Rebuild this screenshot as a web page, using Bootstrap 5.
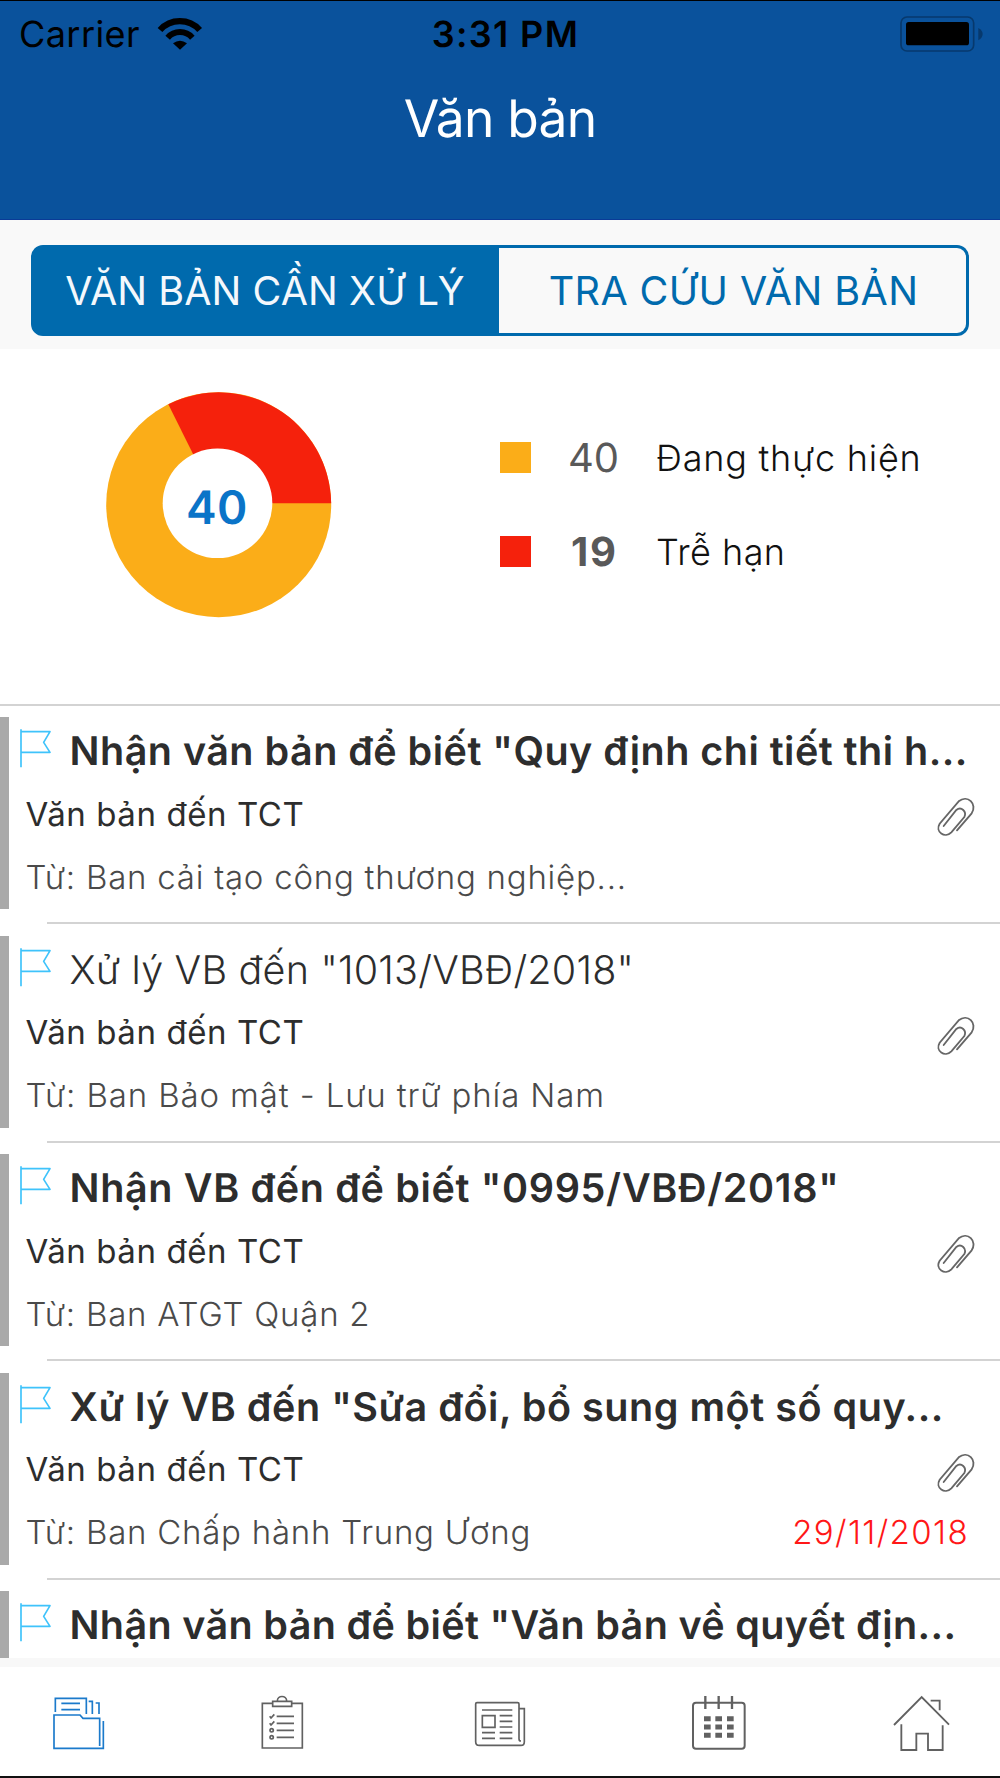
<!DOCTYPE html>
<html lang="vi">
<head>
<meta charset="utf-8">
<meta name="viewport" content="width=device-width, initial-scale=1">
<title>Văn bản</title>
<link href="https://cdn.jsdelivr.net/npm/bootstrap@5.3.0/dist/css/bootstrap.min.css" rel="stylesheet">
<style>
body{font-family:Inter,"Liberation Sans",sans-serif;color:#2d2d2d;background:#fff;height:1778px;overflow:hidden;text-rendering:geometricPrecision}
svg{display:block;flex:none;fill:none}
.app-head{background:#0a529c;height:220px;border-top:1px solid #000;border-bottom:1px solid #0a3b97;color:#000}
.status-bar{height:66px;font-size:36px;line-height:1;display:grid;grid-template-columns:1fr auto 1fr}
.carrier{padding-left:19px;letter-spacing:.43px}
.wifi{margin-left:16px}
.clock{font-weight:600;letter-spacing:1.37px;margin-left:11px}
.battery{margin-right:13px;justify-self:end}
.app-title{font-size:51.5px;line-height:105px;font-weight:400;letter-spacing:-.78px;margin:0}
.seg-bar{background:#f9f9f9;height:129px;padding:25px 31px 0}
.seg-bar .btn{--bs-btn-font-size:39.5px;--bs-btn-line-height:1;--bs-btn-border-width:3px;--bs-btn-border-radius:12px;--bs-btn-padding-x:0;--bs-btn-padding-y:0;--bs-btn-color:#006aad;--bs-btn-border-color:#006aad;--bs-btn-active-bg:#006aad;--bs-btn-active-border-color:#006aad;--bs-btn-active-color:#f4f8fc;height:91px;padding-top:2px}
.seg-bar .seg-a{flex:0 0 468px;letter-spacing:.08px}
.seg-bar .seg-b{letter-spacing:.42px;margin-left:-2px;border-left:0;padding-left:3px}
.summary{height:355px;padding:43px 0 0 106px}
.donut-num{font-size:46px;font-weight:580;letter-spacing:.36px;fill:#0a74c8}
.legend-box{margin:19px 0 0 168px}
.legend-line{height:93.7px;line-height:1}
.swatch{width:31px;height:31px;margin-right:37px}
.legend-num{font-size:40px;width:88px;color:#595959}
.legend-num.late{font-weight:700;letter-spacing:1.75px;padding-left:3px}
.legend-name{font-size:36px;font-weight:340;letter-spacing:.78px;color:#111;padding-top:1px}
.legend-num.late + .legend-name{letter-spacing:.45px}
.doc-list{height:954px;border-top:2px solid #d3d3d3}
.doc-row{height:218.5px;padding-top:11px;flex:none}
.doc-main{height:192px}
.doc-bar{width:9px;background:#a9a9a9;flex:none}
.doc-body{padding:0 22px 0 9px;min-width:0}
.flag{margin-top:9px;width:36px;height:44px}
.doc-title{font-size:39.5px;line-height:68.6px;height:65.5px;font-weight:600;margin:0 0 0 15.5px;letter-spacing:.48px;white-space:nowrap}
.doc-row:nth-child(2) .doc-title{font-weight:340;letter-spacing:.2px}
.doc-row:nth-child(3) .doc-title{letter-spacing:.66px}
.doc-row:nth-child(4) .doc-title{letter-spacing:.54px}
.doc-row:nth-child(5) .doc-title{letter-spacing:.35px}
.doc-kind,.doc-from{font-size:33px;line-height:63px;height:63px;padding-left:7.5px}
.doc-kind{letter-spacing:.58px;font-weight:390}
.doc-from{letter-spacing:.76px;font-weight:350;color:#4a4a4a}
.doc-row:nth-child(2) .doc-from{letter-spacing:.88px}
.doc-date{color:#ff1717;font-weight:350;letter-spacing:1.4px;margin-right:9px}
.clip{margin-top:12.5px}
.doc-sep{height:2px;margin:13px 0 0 47px;background:#d3d3d3}
.tab-strip{background:#fff;border-top:9px solid #f8f8f8;border-bottom:2px solid #111;height:120px;padding:25px 0 0 48px;color:#616161;stroke-width:5}
.tab-strip a{color:inherit;margin-right:158px}
.tab-strip a:first-child{color:#1b7acb;margin-right:144px}
.tab-strip a:nth-child(4){margin-right:143px}
.tab-strip a:last-child{margin-right:0}
</style>
</head>
<body class="d-flex flex-column">
<svg width="0" height="0" class="position-absolute">
  <symbol id="flag" viewBox="54 108 108 132"><path d="M63 118V232M63 125H150L131 157L150 187H63" stroke="#3fc3fb" stroke-width="5" stroke-linejoin="round"/></symbol>
  <symbol id="clip" viewBox="1302 315 132 132"><path d="M1371 421L1415 370C1433 343 1403 312 1376 334L1319 401C1304 426 1335 446 1354 427L1393 381C1401 365 1384 348 1369 360L1331 408" stroke="#666" stroke-width="5.5" stroke-linecap="round"/></symbol>
</svg>
<header class="app-head flex-shrink-0">
  <div class="status-bar align-items-center">
    <div class="carrier d-flex align-items-center">Carrier
      <svg class="wifi" width="48" height="36" viewBox="468 45 144 108"><path d="M480 87A80 80 0 0 1 599 87" stroke="#000" stroke-width="19"/><path d="M503 110A49 49 0 0 1 577 110" stroke="#000" stroke-width="18"/><path d="M540 146L519 127Q540 111 561 127Z" fill="#000"/></svg>
    </div>
    <div class="clock">3:31 PM</div>
    <svg class="battery" width="90" height="44" viewBox="1191 36 270 132"><rect x="1203" y="51" width="218" height="102" rx="18" stroke="#07396d" stroke-width="5"/><rect x="1218" y="66" width="189" height="70" rx="8" fill="#000"/><path d="M1435 84Q1448 91 1448 102T1435 121Z" fill="#07396d"/></svg>
  </div>
  <h1 class="app-title text-center text-white">Văn bản</h1>
</header>
<nav class="seg-bar flex-shrink-0">
  <div class="btn-group d-flex">
    <button type="button" class="btn btn-outline-primary active seg-a">VĂN BẢN CẦN XỬ LÝ</button>
    <button type="button" class="btn btn-outline-primary seg-b">TRA CỨU VĂN BẢN</button>
  </div>
</nav>
<section class="summary d-flex align-items-start flex-shrink-0">
  <svg width="226" height="226" viewBox="0 0 226 226"><circle cx="112.7" cy="112.7" r="112.5" fill="#fbad18"/><path d="M111.5 111.3L62.3 12.3A112.5 112.5 0 0 1 225.2 111.3Z" fill="#f5210c"/><circle cx="111.5" cy="111.3" r="54.8" fill="#fff"/><text class="donut-num" x="80" y="131.8">40</text></svg>
  <div class="legend-box">
    <div class="legend-line d-flex align-items-center"><span class="swatch" style="background:#fbad18"></span><span class="legend-num">40</span><span class="legend-name">Đang thực hiện</span></div>
    <div class="legend-line d-flex align-items-center"><span class="swatch" style="background:#f5210c"></span><span class="legend-num late">19</span><span class="legend-name">Trễ hạn</span></div>
  </div>
</section>
<main class="doc-list d-flex flex-column overflow-hidden flex-shrink-0">
  <article class="doc-row">
    <div class="doc-main d-flex"><div class="doc-bar"></div><div class="doc-body flex-grow-1">
      <div class="d-flex"><svg class="flag"><use href="#flag"/></svg><h2 class="doc-title">Nhận văn bản để biết "Quy định chi tiết thi h...</h2></div>
      <div class="doc-kind d-flex justify-content-between">Văn bản đến TCT<svg class="clip" width="44" height="44"><use href="#clip"/></svg></div>
      <div class="doc-from">Từ: Ban cải tạo công thương nghiệp...</div>
    </div></div>
    <div class="doc-sep"></div>
  </article>
  <article class="doc-row">
    <div class="doc-main d-flex"><div class="doc-bar"></div><div class="doc-body flex-grow-1">
      <div class="d-flex"><svg class="flag"><use href="#flag"/></svg><h2 class="doc-title">Xử lý VB đến "1013/VBĐ/2018"</h2></div>
      <div class="doc-kind d-flex justify-content-between">Văn bản đến TCT<svg class="clip" width="44" height="44"><use href="#clip"/></svg></div>
      <div class="doc-from">Từ: Ban Bảo mật - Lưu trữ phía Nam</div>
    </div></div>
    <div class="doc-sep"></div>
  </article>
  <article class="doc-row">
    <div class="doc-main d-flex"><div class="doc-bar"></div><div class="doc-body flex-grow-1">
      <div class="d-flex"><svg class="flag"><use href="#flag"/></svg><h2 class="doc-title">Nhận VB đến để biết "0995/VBĐ/2018"</h2></div>
      <div class="doc-kind d-flex justify-content-between">Văn bản đến TCT<svg class="clip" width="44" height="44"><use href="#clip"/></svg></div>
      <div class="doc-from">Từ: Ban ATGT Quận 2</div>
    </div></div>
    <div class="doc-sep"></div>
  </article>
  <article class="doc-row">
    <div class="doc-main d-flex"><div class="doc-bar"></div><div class="doc-body flex-grow-1">
      <div class="d-flex"><svg class="flag"><use href="#flag"/></svg><h2 class="doc-title">Xử lý VB đến "Sửa đổi, bổ sung một số quy...</h2></div>
      <div class="doc-kind d-flex justify-content-between">Văn bản đến TCT<svg class="clip" width="44" height="44"><use href="#clip"/></svg></div>
      <div class="doc-from d-flex justify-content-between">Từ: Ban Chấp hành Trung Ương<span class="doc-date">29/11/2018</span></div>
    </div></div>
    <div class="doc-sep"></div>
  </article>
  <article class="doc-row">
    <div class="doc-main d-flex"><div class="doc-bar"></div><div class="doc-body flex-grow-1">
      <div class="d-flex"><svg class="flag"><use href="#flag"/></svg><h2 class="doc-title">Nhận văn bản để biết "Văn bản về quyết địn...</h2></div>
    </div></div>
  </article>
</main>
<nav class="tab-strip d-flex flex-shrink-0">
  <a href="#"><svg width="60" height="60" viewBox="144 156 180 180" stroke="currentColor"><path d="M166 216V175H259V222M184 190H240M184 209H240M266 184H277V222M287 189H297V222M299 318V235H249L240 225H162V325H310V243"/></svg></a>
  <a href="#"><svg width="60" height="60" viewBox="756 156 180 180" stroke="currentColor"><path d="M817 190H787V324H907V190H876M818 184H875V199H818ZM832 183C832 165 860 165 860 183M809 229L813 234L823 223M809 250L813 255L823 244M830 229H882M830 250H882M830 271H882M830 292H882"/><circle cx="815" cy="271" r="5"/><circle cx="815" cy="292" r="5"/></svg></a>
  <a href="#"><svg width="60" height="60" viewBox="90 156 180 180" stroke="currentColor"><path d="M237 297V192Q237 188 233 188H111Q107 188 107 192V305Q107 316 118 316H243Q253 316 253 305V206H238M237 296Q237 303 243 303M126 210H217M179 227H217M179 244H217M179 261H217M126 278H165M179 278H217M126 295H165M179 295H217M127 227H165V262H127Z"/></svg></a>
  <a href="#"><svg width="60" height="60" viewBox="744 156 180 180" stroke="currentColor"><rect x="759" y="188" width="155" height="138" rx="9" stroke-width="6"/><path d="M796 168V207M836 168V207M876 168V207" stroke-width="7"/><path d="M802 229V295M836 229V295M871 229V295" stroke-width="20" stroke-dasharray="15 9.5"/></svg></a>
  <a href="#"><svg width="60" height="60" viewBox="693 756 180 180" stroke="currentColor"><path d="M702 855L785 771L867 854M812 782H839V811M724 853V930H769V881H804V930H848V856" stroke-width="5.5"/></svg></a>
</nav>
<script src="https://cdn.jsdelivr.net/npm/bootstrap@5.3.0/dist/js/bootstrap.bundle.min.js"></script>
</body>
</html>
